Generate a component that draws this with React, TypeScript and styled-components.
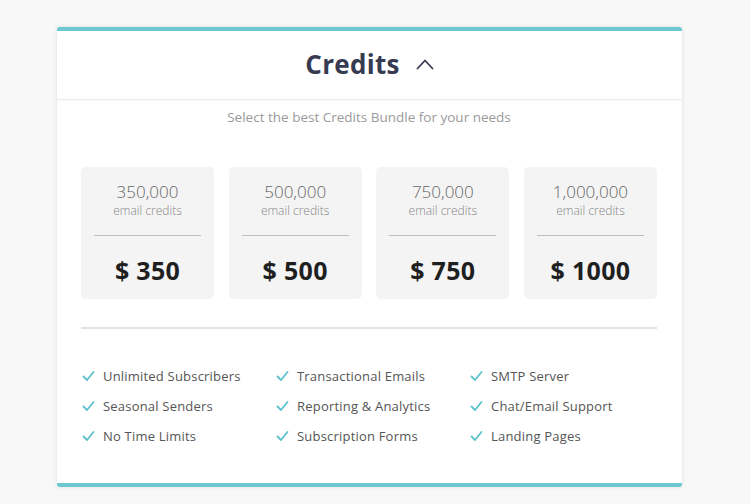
import React from "react";
import styled, { createGlobalStyle } from "styled-components";

const Global = createGlobalStyle`
  html, body { margin: 0; padding: 0; background: #f8f8f8; }
  body { font-family: "Open Sans", "Liberation Sans", sans-serif; }
`;

const Page = styled.div`
  width: 750px;
  height: 504px;
  padding: 27px 0 0 57px;
  box-sizing: border-box;
`;

const Card = styled.div`
  width: 625px;
  background: #fff;
  border-top: 4px solid #6cc7cf;
  border-bottom: 4px solid #6cc7cf;
  border-radius: 3px;
  box-shadow: 0 0 4px rgba(0, 0, 0, 0.1);
  box-sizing: border-box;
  height: 460px;
  display: flex;
  flex-direction: column;
`;

const Header = styled.div`
  height: 69px;
  padding-bottom: 2px;
  box-sizing: border-box;
  display: flex;
  align-items: center;
  justify-content: center;
  gap: 16px;
  border-bottom: 1px solid #ececec;
  box-shadow: 0 1px 2px rgba(0, 0, 0, 0.03);
`;

const Title = styled.h1`
  margin: 0;
  font-size: 26px;
  font-weight: 700;
  color: #363b51;
  letter-spacing: 0.3px;
`;

const Body = styled.div`
  padding: 7px 25px 0 24px;
  display: flex;
  flex-direction: column;
`;

const Subtitle = styled.p`
  margin: 0;
  text-align: center;
  font-size: 13.5px;
  color: #9a9a9a;
  line-height: 20px;
`;

const Bundles = styled.div`
  margin-top: 40px;
  display: grid;
  grid-template-columns: repeat(4, 133px);
  justify-content: space-between;
`;

const Bundle = styled.div`
  height: 132px;
  background: #f4f4f4;
  border-radius: 5px;
  padding: 14px 13px 0;
  box-sizing: border-box;
  display: flex;
  flex-direction: column;
  align-items: center;
`;

const Amount = styled.div`
  font-size: 17px;
  font-weight: 300;
  color: #666;
  line-height: 22px;
`;

const Unit = styled.div`
  font-size: 12px;
  font-weight: 300;
  color: #858585;
  line-height: 16px;
`;

const Rule = styled.div`
  align-self: stretch;
  height: 1px;
  background: #bdbdbd;
  margin-top: 16px;
`;

const Price = styled.div`
  margin-top: 19px;
  font-size: 25px;
  font-weight: 700;
  color: #1f1f1f;
  line-height: 30px;
  letter-spacing: 0.3px;
`;

const Divider = styled.div`
  margin-top: 28px;
  height: 2px;
  background: #e2e2e2;
`;

const Features = styled.ul`
  list-style: none;
  margin: 38px 0 0;
  padding: 0;
  display: grid;
  grid-template-columns: repeat(3, 194px);
  row-gap: 12px;
`;

const Feature = styled.li`
  display: flex;
  align-items: center;
  gap: 8px;
  padding-left: 1px;
  font-size: 13px;
  color: #555;
  line-height: 18px;
  letter-spacing: 0.2px;
`;

const Check = () => (
  <svg width="13" height="12" viewBox="0 0 13 12" fill="none">
    <path d="M1.5 6.5 L5 10 L11.5 2" stroke="#5dc1cb" strokeWidth="1.8" strokeLinecap="round" strokeLinejoin="round" />
  </svg>
);

const Chevron = () => (
  <svg width="18" height="12" viewBox="0 0 18 12" fill="none">
    <path d="M1.5 10.5 L9 2.5 L16.5 10.5" stroke="#363b51" strokeWidth="1.8" strokeLinecap="round" strokeLinejoin="round" />
  </svg>
);

const bundles = [
  { amount: "350,000", price: "$ 350" },
  { amount: "500,000", price: "$ 500" },
  { amount: "750,000", price: "$ 750" },
  { amount: "1,000,000", price: "$ 1000" },
];

const features = [
  "Unlimited Subscribers",
  "Transactional Emails",
  "SMTP Server",
  "Seasonal Senders",
  "Reporting & Analytics",
  "Chat/Email Support",
  "No Time Limits",
  "Subscription Forms",
  "Landing Pages",
];

export default function App() {
  return (
    <>
      <Global />
      <Page>
        <Card>
          <Header>
            <Title>Credits</Title>
            <Chevron />
          </Header>
          <Body>
            <Subtitle>Select the best Credits Bundle for your needs</Subtitle>
            <Bundles>
              {bundles.map((b) => (
                <Bundle key={b.amount}>
                  <Amount>{b.amount}</Amount>
                  <Unit>email credits</Unit>
                  <Rule />
                  <Price>{b.price}</Price>
                </Bundle>
              ))}
            </Bundles>
            <Divider />
            <Features>
              {features.map((f) => (
                <Feature key={f}>
                  <Check />
                  {f}
                </Feature>
              ))}
            </Features>
          </Body>
        </Card>
      </Page>
    </>
  );
}
